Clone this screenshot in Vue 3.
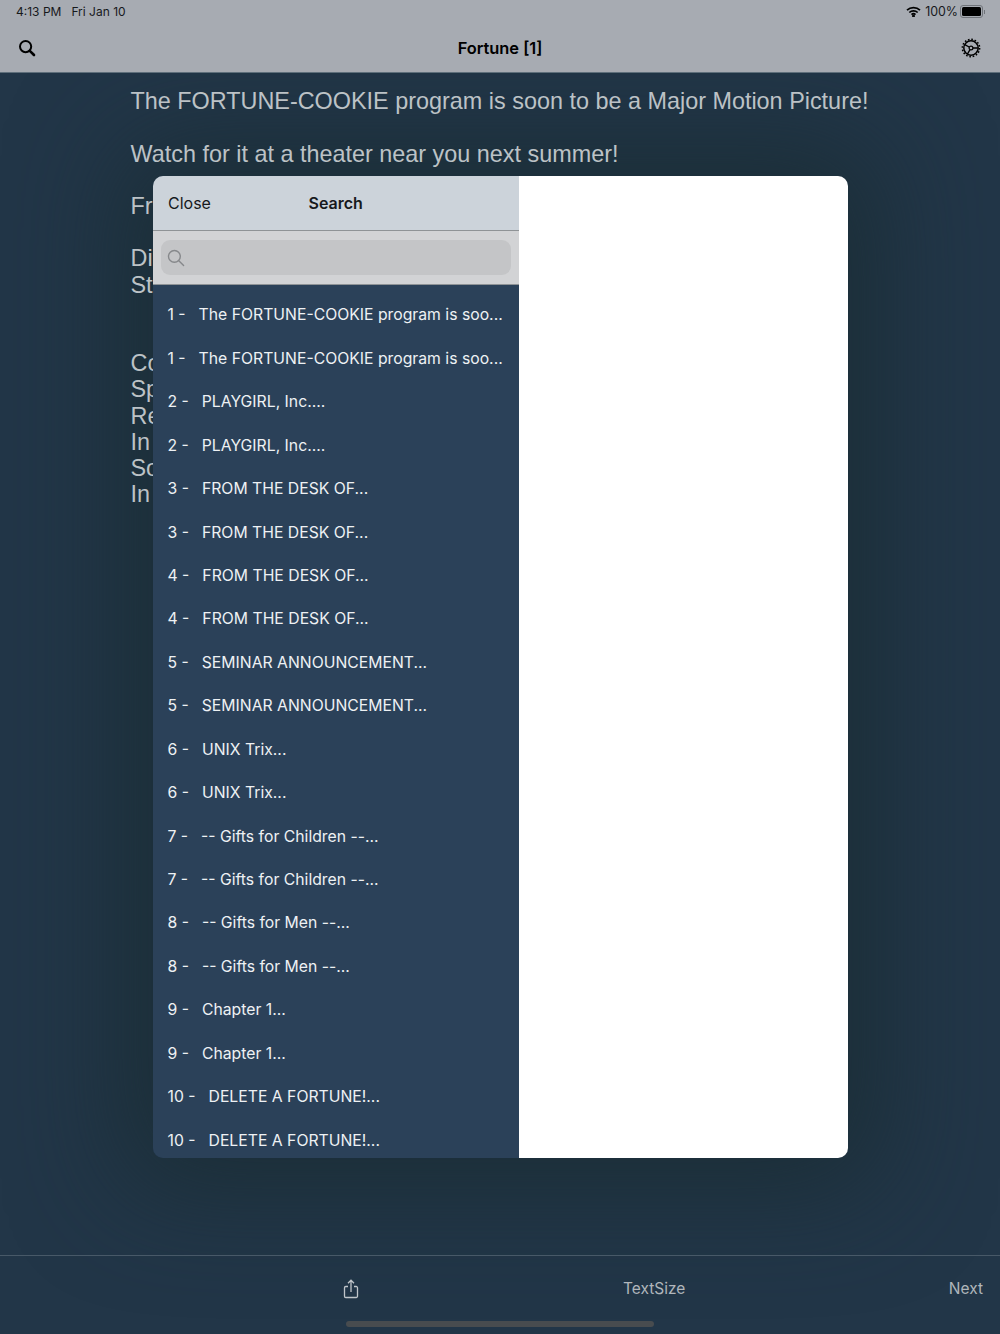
<script setup>
const bodyLines = [
  'The FORTUNE-COOKIE program is soon to be a Major Motion Picture!',
  '',
  'Watch for it at a theater near you next summer!',
  '',
  'Fr',
  '',
  'Di',
  'St',
  '',
  '',
  'Co',
  'Sp',
  'Re',
  'In',
  'So',
  'In'
]
const titles = [
  'The FORTUNE-COOKIE program is soo...',
  'PLAYGIRL, Inc....',
  'FROM THE DESK OF...',
  'FROM THE DESK OF...',
  'SEMINAR ANNOUNCEMENT...',
  'UNIX Trix...',
  '-- Gifts for Children --...',
  '-- Gifts for Men --...',
  'Chapter 1...',
  'DELETE A FORTUNE!...'
]
const rows = titles.flatMap((title, i) => [
  { num: `${i + 1} -`, title },
  { num: `${i + 1} -`, title }
])
</script>

<template>
  <div class="screen">
    <div class="modal-shadow"></div>
    <header class="topbar">
      <div class="status">
        <span class="status-left"><span>4:13 PM</span><span>Fri Jan 10</span></span>
        <span class="status-right">
          <svg width="15" height="11" viewBox="0 0 15 11" fill="none" stroke="#000" stroke-width="1.7">
            <path d="M1 4.2a9.4 9.4 0 0 1 13 0" />
            <path d="M3.3 6.5a6.1 6.1 0 0 1 8.4 0" />
            <path d="M5.5 8.6a3 3 0 0 1 4 0" />
            <circle cx="7.5" cy="9.9" r=".6" fill="#000" />
          </svg>
          <span class="percent">100%</span>
          <span class="battery"><span class="battery-fill"></span></span>
          <span class="battery-tip"></span>
        </span>
      </div>
      <div class="nav">
        <svg width="18" height="18" viewBox="0 0 18 18" fill="none" stroke="#000">
          <circle cx="7.6" cy="7.6" r="5.6" stroke-width="2" />
          <path d="M11.8 11.8 16 16" stroke-width="2.6" stroke-linecap="round" />
        </svg>
        <h1 class="nav-title">Fortune [1]</h1>
        <svg width="20" height="20" viewBox="0 0 20 20" fill="none" stroke="#000">
          <circle cx="10" cy="10" r="7.2" stroke-width="1.5" />
          <circle cx="10" cy="10" r="8.6" stroke-width="1.6" stroke-dasharray="1.6 1.78" />
          <circle cx="10" cy="10" r="1.9" stroke-width="1.2" />
          <path d="M8.2 9 3.8 6.6M11.9 10h5M9 11.6l-2.6 4.5" stroke-width="1.3" />
        </svg>
      </div>
    </header>

    <main class="reader">
      <p v-for="(line, i) in bodyLines" :key="i" class="reader-line">{{ line }}</p>
    </main>

    <footer class="toolbar">
      <div class="tools">
        <svg class="share" width="16" height="20" viewBox="0 0 16 20" fill="none" stroke="#c0c5ca" stroke-width="1.3">
          <path d="M5 7.5H2.8A1.3 1.3 0 0 0 1.5 8.8v8.4a1.3 1.3 0 0 0 1.3 1.3h10.4a1.3 1.3 0 0 0 1.3-1.3V8.8a1.3 1.3 0 0 0-1.3-1.3H11" />
          <path d="M8 13V1.5M5 4.2 8 1.2l3 3" />
        </svg>
        <span class="tool-text">TextSize</span>
        <span class="tool-text">Next</span>
      </div>
      <div class="home-indicator"></div>
    </footer>

    <section class="modal">
      <div class="panel">
        <div class="panel-head">
          <span class="close">Close</span>
          <span class="panel-title">Search</span>
        </div>
        <div class="search-wrap">
          <div class="search-field">
            <svg width="18" height="18" viewBox="0 0 18 18" fill="none" stroke="#86888b" stroke-width="1.4">
              <circle cx="7.4" cy="7.4" r="5.9" />
              <path d="m11.8 11.8 4.8 4.8" stroke-linecap="round" />
            </svg>
          </div>
        </div>
        <ul class="results">
          <li v-for="(row, i) in rows" :key="i" class="result">
            <span>{{ row.num }}</span><span>{{ row.title }}</span>
          </li>
        </ul>
      </div>
      <div class="detail"></div>
    </section>
  </div>
</template>

<style>
html, body { margin: 0; background: #213547; }
</style>

<style scoped>
.screen {
  position: relative;
  width: 1000px;
  height: 1334px;
  overflow: hidden;
  display: flex;
  flex-direction: column;
  background: #223648;
  font-family: Inter, "Noto Sans", sans-serif;
}
.modal-shadow {
  position: absolute;
  left: 153px;
  top: 176px;
  width: 694px;
  height: 982px;
  border-radius: 10px;
  box-shadow: 0 0 110px 30px rgba(26, 45, 52, .85);
}
.topbar {
  position: relative;
  height: 72px;
  flex: none;
  background: #a7abb2;
  border-bottom: 1px solid #5f6f7b;
  box-sizing: content-box;
  color: #000;
}
.status {
  height: 23px;
  padding: 0 15px 0 16px;
  display: flex;
  justify-content: space-between;
  align-items: center;
  font-size: 12px;
  color: #17191c;
}
.status-left { display: flex; gap: 10px; }
.status-right { display: flex; align-items: center; gap: 4px; }
.percent { font-size: 12.4px; }
.battery {
  width: 19px;
  height: 9px;
  margin-left: -2px;
  padding: 1px;
  border: 1px solid #70747a;
  border-radius: 3px;
  display: flex;
}
.battery-fill { flex: 1; background: #000; border-radius: 1.5px; }
.battery-tip { width: 1px; height: 4px; margin-left: -3px; background: #70747a; }
.nav {
  height: 49px;
  padding: 0 19px 0 18px;
  display: flex;
  justify-content: space-between;
  align-items: center;
}
.nav-title { margin: 0 0 0 3px; font-size: 16.4px; font-weight: 600; line-height: 48px; }
.reader {
  position: relative;
  flex: 1;
  padding: 15.3px 0 0 130.5px;
  color: #bcc2c6;
  font-family: "Liberation Sans", Arial, sans-serif;
  font-size: 23.4px;
  line-height: 26.2px;
}
.reader-line { margin: 0; min-height: 26.2px; white-space: nowrap; }
.toolbar {
  position: relative;
  height: 79px;
  flex: none;
  border-top: 1px solid #485968;
  box-sizing: border-box;
}
.tools { position: relative; height: 66px; color: #b0b6bb; }
.share { position: absolute; left: 343px; top: 23px; }
.tool-text { position: absolute; top: 23px; font-size: 15.5px; line-height: 20px; }
.tool-text:nth-of-type(1) { left: 623px; }
.tool-text:nth-of-type(2) { right: 17px; }
.home-indicator {
  position: absolute;
  left: 346px;
  bottom: 7px;
  width: 308px;
  height: 6px;
  border-radius: 3px;
  background: #484c4f;
}
.modal {
  position: absolute;
  left: 152.5px;
  top: 176px;
  width: 695px;
  height: 982px;
  display: flex;
  overflow: hidden;
  border-radius: 10px;
}
.panel {
  width: 366.3px;
  flex: none;
  display: flex;
  flex-direction: column;
  background: #2b4159;
}
.panel-head {
  position: relative;
  height: 54px;
  flex: none;
  padding-left: 15.5px;
  display: flex;
  align-items: center;
  background: #ccd3da;
  border-bottom: 1px solid #8f9396;
  color: #17191c;
  font-size: 16px;
}
.panel-title {
  position: absolute;
  left: 156px;
  font-weight: 600;
}
.search-wrap {
  height: 54px;
  flex: none;
  padding: 9px 8px;
  box-sizing: border-box;
  background: #d2d3d5;
  border-bottom: 1px solid #8f9396;
}
.search-field {
  height: 35px;
  padding-left: 6.5px;
  display: flex;
  align-items: center;
  background: #c4c5c7;
  border-radius: 9px;
}
.results {
  margin: 0;
  padding: 8.1px 0 0;
  list-style: none;
  flex: 1;
  overflow: hidden;
}
.result {
  height: 43.45px;
  padding-left: 15px;
  display: flex;
  align-items: center;
  gap: 13px;
  color: #eef1f4;
  font-size: 15.75px;
  white-space: nowrap;
}
.detail { flex: 1; background: #fff; }
</style>
